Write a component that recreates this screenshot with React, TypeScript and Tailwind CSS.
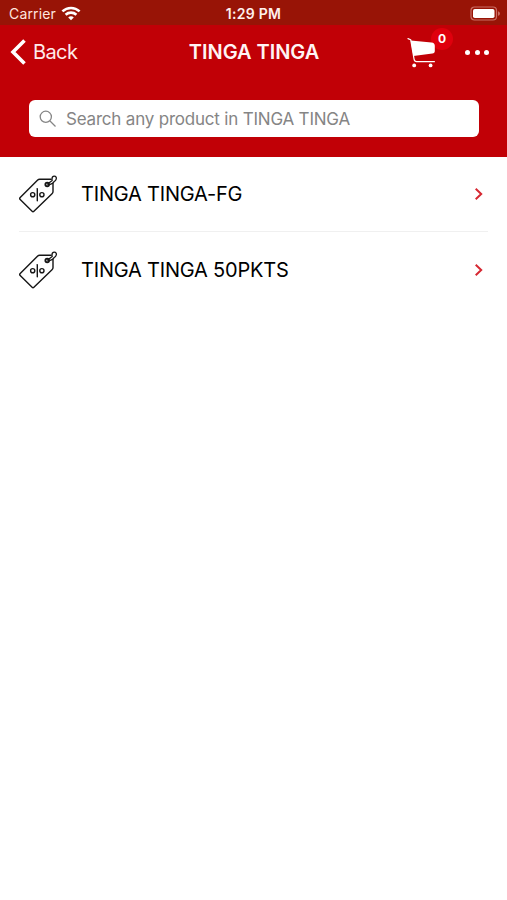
import React from "react";

const products = ["TINGA TINGA-FG", "TINGA TINGA 50PKTS"];

function WifiIcon() {
  return (
    <svg className="ml-[4px] h-[15px] w-[20px]" viewBox="0 0 20 15" fill="none" stroke="#fff" strokeWidth="2.6">
      <path d="M1.4 5.4C6.3 .8 13.7 .8 18.6 5.4" />
      <path d="M4.6 8.7c3.1-2.8 7.7-2.8 10.8 0" />
      <path d="M7.2 11.4c1.6-1.4 4-1.4 5.6 0L10 14.3z" fill="#fff" stroke="none" />
    </svg>
  );
}

function BatteryIcon() {
  return (
    <svg className="h-[15px] w-[31px]" viewBox="0 0 31 15" fill="none">
      <rect x="1" y="1" width="25.5" height="13" rx="3.5" stroke="#c96d64" strokeWidth="1.2" />
      <rect x="3" y="3" width="21.5" height="9" rx="1.8" fill="#fff" />
      <path d="M28 5.2c2.6.9 2.6 3.7 0 4.6z" fill="#c96d64" />
    </svg>
  );
}

function CartIcon() {
  return (
    <svg className="relative z-10 h-[32px] w-[30px]" viewBox="0 0 30 32" fill="none">
      <path d="M1 2.6l2.7 1.1L7.1 23.4c.3 1.6 1 2.3 2.5 2.3h17.8" stroke="#fff" strokeWidth="1.2" strokeLinecap="round" strokeLinejoin="round" />
      <path d="M3.7 4.4l20.8 2.2c2.2.2 3.3 1.3 3.3 3.2v5.1c0 1.5-.8 2.3-2.4 2.6L6.4 20.1z" fill="#fff" />
      <circle cx="7.2" cy="29.4" r="1.9" fill="#fff" />
      <circle cx="23.6" cy="29.4" r="1.9" fill="#fff" />
    </svg>
  );
}

function TagIcon() {
  return (
    <svg className="h-[40px] w-[40px]" viewBox="0 0 40 40" fill="none" stroke="#161616" strokeWidth="1.4" strokeLinejoin="round" strokeLinecap="round">
      <path d="M32.3 5.3H20.6c-.8 0-1.3.2-1.9.8L1.2 23.6c-.7.7-.7 1.3 0 2l11.9 11.6c.6.6 1.2.6 1.8 0l18.1-17.4c.7-.6 1-1.2 1-2V9.4" />
      <circle cx="28.2" cy="10.4" r="1.8" strokeWidth="1.9" />
      <path d="M28.6 10L33.2 6.4M30.6 10.6c2.3-.5 4-1.7 5-3.4M33.2 5.1c-.5-1.6.6-3 2.1-3 1.6 0 2.5 1.5 1.9 3-.3.9-.8 1.6-1.6 2.1" strokeWidth="1.3" />
      <circle cx="13.7" cy="20.7" r="2.1" />
      <circle cx="22.9" cy="20.7" r="2.1" />
      <path d="M18.3 14.6v12.2" />
    </svg>
  );
}

export default function App() {
  return (
    <main className="min-h-[900px] w-[507px] overflow-hidden bg-white font-['Inter','Liberation_Sans',sans-serif]">
      <header className="h-[157px] bg-[#c10006] text-white">
        <div className="grid h-[25px] grid-cols-3 items-center bg-[#981406] pt-[2px] text-[14px] leading-none">
          <div className="flex items-center pl-[9px]">
            <span className="w-[48px] tracking-[0.15px] whitespace-nowrap text-[#ffe4df]">Carrier</span>
            <WifiIcon />
          </div>
          <span className="text-center font-semibold tracking-[0.3px] text-[#fff0ed]">1:29 PM</span>
          <div className="flex justify-end pr-[6px]"><BatteryIcon /></div>
        </div>
        <nav className="grid h-[54px] grid-cols-[160px_188px_159px] items-center">
          <button className="flex items-center pl-[10px] text-[20px] leading-none tracking-[-0.6px]">
            <svg className="mr-[7px] h-[26px] w-[16px]" viewBox="0 0 16 26" fill="none" stroke="#fff" strokeWidth="3.6">
              <path d="M14.5 1.5L3 13 14.5 24.5" />
            </svg>
            <span className="text-[#ffeaea]">Back</span>
          </button>
          <h1 className="text-center text-[20px] leading-none font-semibold tracking-[-0.05px] whitespace-nowrap text-[#fff4f4]">TINGA TINGA</h1>
          <div className="flex items-center">
            <button aria-label="Cart" className="relative ml-[59px] h-[32px] w-[30px]">
              <CartIcon />
              <span className="absolute -top-[8px] left-[24px] flex h-[22px] w-[22px] items-center justify-center rounded-full bg-[#df000d] text-[12px] leading-none font-bold">0</span>
            </button>
            <button aria-label="More" className="ml-[28px] flex gap-[4.5px] pt-px">
              <span className="h-[5px] w-[5px] rounded-full bg-white" />
              <span className="h-[5px] w-[5px] rounded-full bg-white" />
              <span className="h-[5px] w-[5px] rounded-full bg-white" />
            </button>
          </div>
        </nav>
        <label className="mt-[21px] ml-[29px] flex h-[37px] w-[450px] items-center rounded-[6px] bg-white pl-[10px]">
          <svg className="h-[18px] w-[18px]" viewBox="0 0 18 18" fill="none" stroke="#858585" strokeWidth="1.3">
            <circle cx="6.8" cy="6.8" r="5.6" />
            <path d="M11 11l5.5 5.5" />
          </svg>
          <input className="ml-[9px] w-[380px] bg-transparent pt-[2px] text-[17px] tracking-[-0.2px] text-black outline-none placeholder:text-[#858585]" placeholder="Search any product in TINGA TINGA" />
        </label>
      </header>
      <ul className="pr-[19px] pl-[19px]">
        {products.map((name) => (
          <li key={name} className="flex h-[77px] items-center border-b border-[#f0f0f0] first:h-[75px] last:border-transparent">
            <TagIcon />
            <span className="ml-[22px] flex-1 text-[20px] leading-none tracking-[-0.2px] text-black">{name}</span>
            <svg className="mr-[3px] h-[14px] w-[12px]" viewBox="0 0 12 14" fill="none" stroke="#d62832" strokeWidth="2">
              <path d="M2.7 1.8L8.2 7 2.7 12.2" />
            </svg>
          </li>
        ))}
      </ul>
    </main>
  );
}
